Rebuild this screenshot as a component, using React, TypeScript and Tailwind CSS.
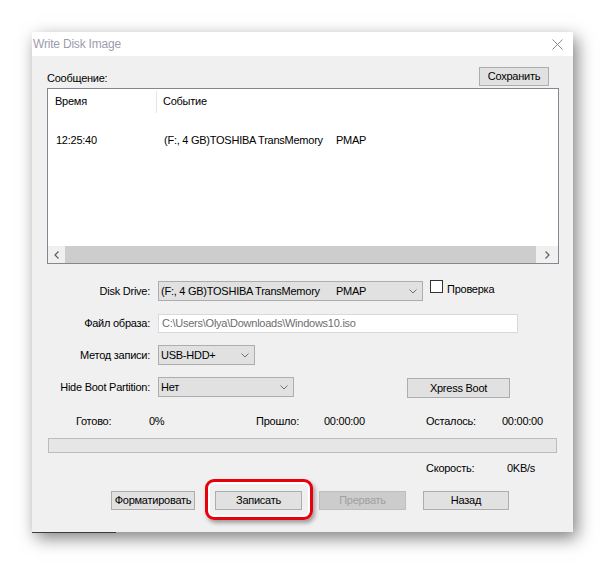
import React from "react";

function Chevron() {
  return (
    <svg width="8" height="5" viewBox="0 0 8 5" className="shrink-0">
      <path d="M0.5 0.5 L4 4 L7.5 0.5" stroke="#707070" strokeWidth="1" fill="none" />
    </svg>
  );
}

function Select({ w, children }: { w: string; children: React.ReactNode }) {
  return (
    <div className={`${w} h-[20px] ml-[8px] flex items-center justify-between border border-[#adadad] bg-[#e1e1e1] pl-[2px] pr-[5px] whitespace-nowrap`}>
      <div className="flex items-center">{children}</div>
      <Chevron />
    </div>
  );
}

function Btn({ w, children, disabled }: { w: string; children: React.ReactNode; disabled?: boolean }) {
  return (
    <div
      className={`${w} h-[19px] flex items-center justify-center border whitespace-nowrap ${
        disabled ? "bg-[#cccccc] border-[#bfbfbf] text-[#a0a0a0]" : "bg-[#e1e1e1] border-[#adadad] text-black"
      }`}
    >
      {children}
    </div>
  );
}

export default function App() {
  return (
    <div className="w-[606px] h-[566px] bg-white pt-[32px] pl-[32px] font-['Liberation_Sans',Arial,sans-serif] text-[11px] tracking-[-0.25px] text-black leading-[13px]">
      <div className="w-[541px] h-[500px] flex flex-col shadow-[4px_6px_16px_rgba(0,0,0,0.5)]">
        {/* Title bar */}
        <div className="h-[24px] bg-white flex items-center pl-[1px] pr-[10px] shrink-0">
          <span className="text-[12px] tracking-[-0.2px] text-[#9c9cae]">Write Disk Image</span>
          <svg width="11" height="11" viewBox="0 0 11 11" className="ml-auto">
            <path d="M0.5 0.5 L10.5 10.5 M10.5 0.5 L0.5 10.5" stroke="#8a8a8a" strokeWidth="1" fill="none" />
          </svg>
        </div>

        {/* Body */}
        <div className="flex-1 bg-[#f0f0f0] flex flex-col relative">
          {/* Message header row */}
          <div className="mt-[11px] h-[19px] flex items-end pl-[15px] pr-[24px]">
            <span className="pb-[1px]">Сообщение:</span>
            <div className="ml-auto w-[70px] h-[19px] flex items-center justify-center border border-[#adadad] bg-[#e1e1e1]">
              Сохранить
            </div>
          </div>

          {/* List */}
          <div className="mt-[2px] ml-[15px] w-[512px] h-[176px] border border-[#828790] bg-white flex flex-col">
            <div className="h-[25px] flex items-center shrink-0">
              <div className="w-[109px] h-[22px] pl-[7px] flex items-center border-r border-[#e5e5e5]">Время</div>
              <div className="pl-[6px]">Событие</div>
            </div>
            <div className="mt-[16px] h-[20px] flex items-center whitespace-nowrap">
              <div className="w-[109px] pl-[8px]">12:25:40</div>
              <div className="pl-[7px] flex">
                <span className="w-[172px]">(F:, 4 GB)TOSHIBA TransMemory</span>
                <span>PMAP</span>
              </div>
            </div>
            <div className="flex-1" />
            <div className="h-[17px] flex bg-[#f0f0f0] shrink-0">
              <div className="w-[17px] flex items-center justify-center">
                <svg width="5" height="8" viewBox="0 0 5 8">
                  <path d="M4.5 0.5 L1 4 L4.5 7.5" stroke="#606060" strokeWidth="1.2" fill="none" />
                </svg>
              </div>
              <div className="w-[471px] bg-[#cdcdcd]" />
              <div className="flex-1 flex items-center justify-center">
                <svg width="5" height="8" viewBox="0 0 5 8">
                  <path d="M0.5 0.5 L4 4 L0.5 7.5" stroke="#606060" strokeWidth="1.2" fill="none" />
                </svg>
              </div>
            </div>
          </div>

          {/* Disk Drive */}
          <div className="mt-[17px] h-[20px] flex items-start">
            <div className="w-[118px] h-[20px] flex items-center justify-end">Disk Drive:</div>
            <Select w="w-[265px]">
              <span className="w-[175px]">(F:, 4 GB)TOSHIBA TransMemory</span>
              <span>PMAP</span>
            </Select>
            <div className="ml-[7px] mt-[-1px] w-[13px] h-[13px] border border-[#333333] bg-white shrink-0" />
            <span className="ml-[4px] mt-[2px]">Проверка</span>
          </div>

          {/* File */}
          <div className="mt-[13px] h-[19px] flex items-center">
            <div className="w-[118px] flex justify-end">Файл образа:</div>
            <div className="ml-[8px] w-[360px] h-[19px] flex items-center border border-[#d9d9d9] bg-white pl-[3px] text-[#6d6d6d]">
              C:\Users\Olya\Downloads\Windows10.iso
            </div>
          </div>

          {/* Method */}
          <div className="mt-[12px] h-[20px] flex items-center">
            <div className="w-[118px] flex justify-end">Метод записи:</div>
            <Select w="w-[97px]">
              <span>USB-HDD+</span>
            </Select>
          </div>

          {/* Hide Boot */}
          <div className="mt-[12px] h-[21px] flex items-start">
            <div className="w-[118px] h-[20px] flex items-center justify-end">Hide Boot Partition:</div>
            <Select w="w-[136px]">
              <span>Нет</span>
            </Select>
            <div className="ml-[113px] mt-[1px] w-[103px] h-[20px] flex items-center justify-center border border-[#adadad] bg-[#e1e1e1]">
              Xpress Boot
            </div>
          </div>

          {/* Progress labels */}
          <div className="mt-[16px] h-[14px] flex items-center pl-[44px] whitespace-nowrap">
            <span className="w-[73px]">Готово:</span>
            <span className="w-[107px]">0%</span>
            <span className="w-[68px]">Прошло:</span>
            <span className="w-[102px]">00:00:00</span>
            <span className="w-[76px]">Осталось:</span>
            <span>00:00:00</span>
          </div>

          {/* Progress bar */}
          <div className="mt-[10px] ml-[16px] w-[509px] h-[15px] border border-[#bcbcbc] bg-[#e6e6e6]" />

          {/* Speed */}
          <div className="mt-[8px] h-[14px] flex items-center pl-[394px]">
            <span className="w-[81px]">Скорость:</span>
            <span>0KB/s</span>
          </div>

          {/* Buttons */}
          <div className="mt-[16px] flex items-center pl-[79px]">
            <Btn w="w-[84px]">Форматировать</Btn>
            <div className="relative ml-[20px]">
              <Btn w="w-[87px]">Записать</Btn>
              <div className="absolute left-[-10px] right-[-11px] top-[-12px] bottom-[-10px] rounded-[9px] border-[3px] border-[#e8000b] shadow-[inset_0_0_0_2px_#ffffff,2px_3px_4px_rgba(0,0,0,0.35)]" />
            </div>
            <div className="ml-[17px]">
              <Btn w="w-[87px]" disabled>
                Прервать
              </Btn>
            </div>
            <div className="ml-[17px]">
              <Btn w="w-[86px]">Назад</Btn>
            </div>
          </div>

          <div className="absolute left-0 bottom-[-1px] w-[84px] h-[1px] bg-[#3c3c3c]" />
        </div>
      </div>
    </div>
  );
}
